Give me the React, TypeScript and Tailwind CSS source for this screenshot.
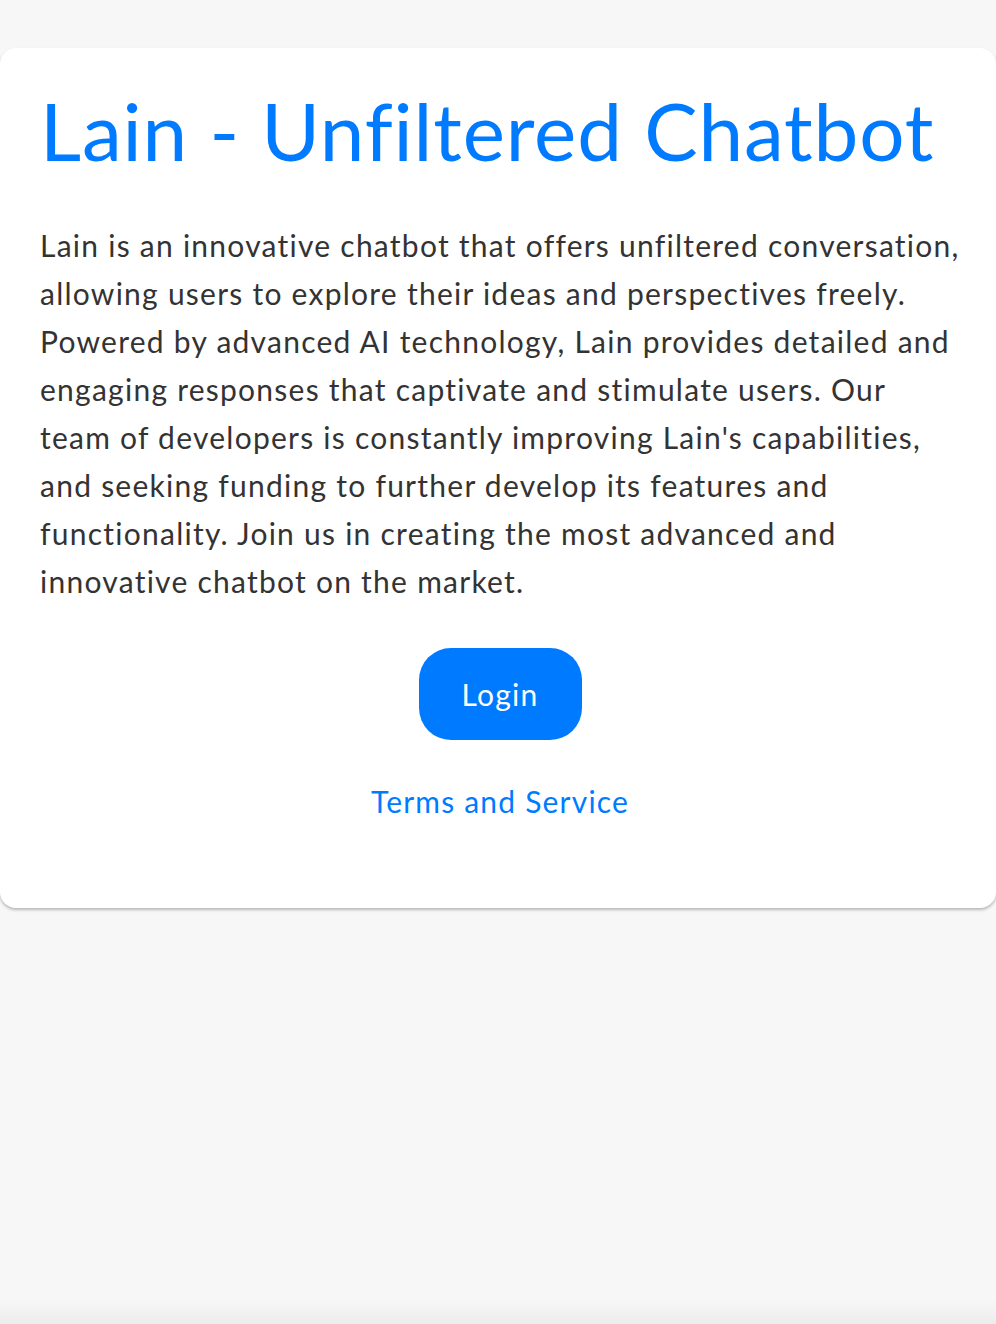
const lines = [
  "Lain is an innovative chatbot that offers unfiltered conversation,",
  "allowing users to explore their ideas and perspectives freely.",
  "Powered by advanced AI technology, Lain provides detailed and",
  "engaging responses that captivate and stimulate users. Our",
  "team of developers is constantly improving Lain's capabilities,",
  "and seeking funding to further develop its features and",
  "functionality. Join us in creating the most advanced and",
  "innovative chatbot on the market.",
]

export default function App() {
  return (
    <main className="min-h-screen flex flex-col bg-[#f7f7f7] font-['Lato',sans-serif]">
      <div className="pt-12">
        <section className="bg-white rounded-2xl shadow-[0_2px_3px_rgba(0,0,0,0.25)] pl-10 pr-9 pt-[42px] pb-[83px]">
          <h1 className="text-[80px] leading-none tracking-[0.85px] text-[#007bff]">Lain - Unfiltered Chatbot</h1>

          <p className="mt-[51px] text-[30px] leading-[48px] tracking-[1.25px] text-[#333] whitespace-nowrap">
            {lines.map((l) => (
              <span key={l} className="block">
                {l}
              </span>
            ))}
          </p>

          <div className="flex flex-col items-center">
            <button className="mt-[43px] w-[163px] h-[92px] rounded-[32px] bg-[#007bff] text-white text-[30px] tracking-[1.2px]">
              Login
            </button>
            <a href="#" className="mt-[37px] text-[30px] leading-[48px] tracking-[1.2px] text-[#007bff]">
              Terms and Service
            </a>
          </div>
        </section>
      </div>
      <div className="flex-1" />
      <div className="h-6 bg-gradient-to-b from-[#f7f7f7] to-[#ececec]" />
    </main>
  )
}
